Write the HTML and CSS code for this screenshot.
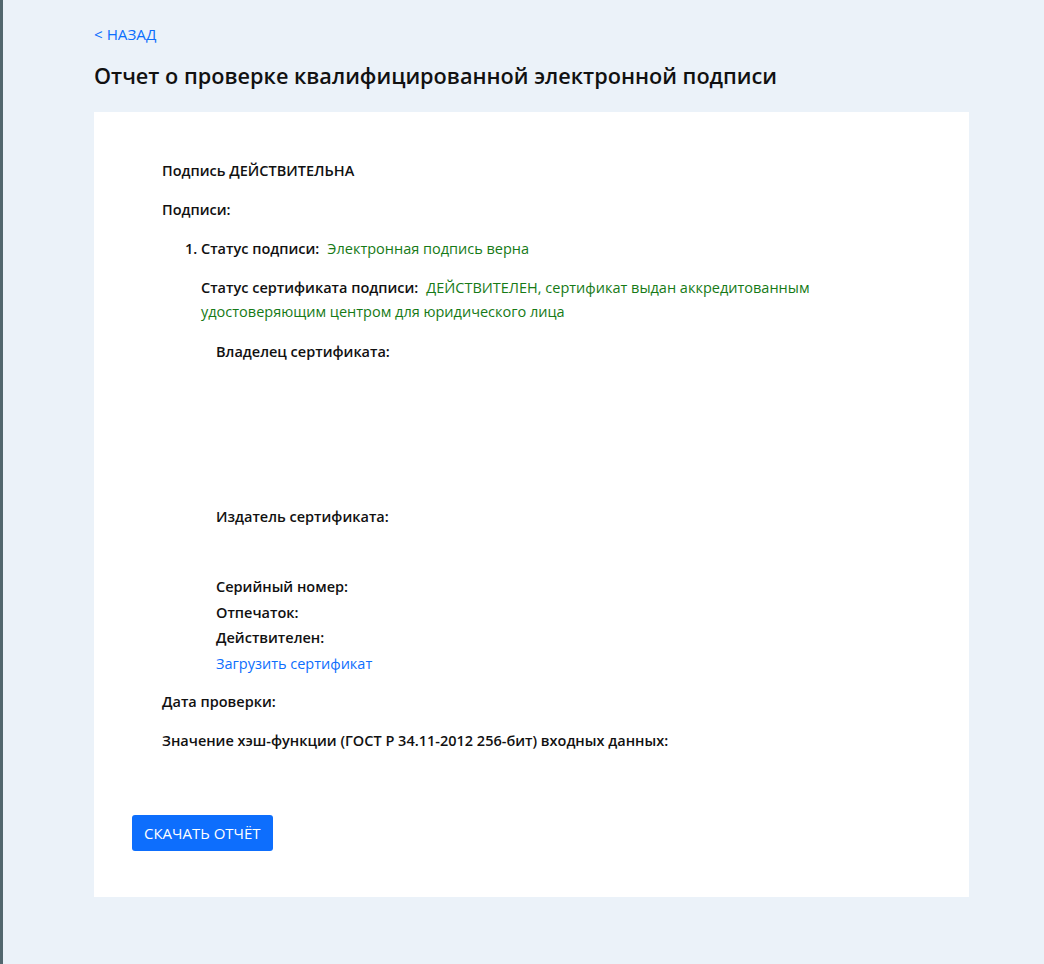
FILE: index.html
```html
<!DOCTYPE html>
<html lang="ru">

<head>
    <meta charset="UTF-8">
    <meta name="viewport" content="width=device-width, initial-scale=1.0">
    <title>Отчет о проверке</title>
    <link rel="stylesheet" href="styles.css">
</head>

<body>

    <div class="page">
        <a href="#" class="back">&lt; НАЗАД</a>
        <h1 class="title">Отчет о проверке квалифицированной электронной подписи</h1>

        <div class="card">
            <div class="report">
                <p class="verdict">Подпись ДЕЙСТВИТЕЛЬНА</p>
                <p><strong>Подписи:</strong></p>

                <ol class="signs">
                    <li>
                        <p><strong>Статус подписи:</strong><span class="ok">Электронная подпись верна</span></p>
                        <p class="certStatus"><strong>Статус сертификата подписи:</strong><span class="ok">ДЕЙСТВИТЕЛЕН, сертификат выдан аккредитованным удостоверяющим центром для юридического лица</span></p>

                        <div class="cert">
                            <div class="owner"><strong>Владелец сертификата:</strong></div>
                            <div class="issuer"><strong>Издатель сертификата:</strong></div>
                            <div class="row"><strong>Серийный номер:</strong></div>
                            <div class="row"><strong>Отпечаток:</strong></div>
                            <div class="row"><strong>Действителен:</strong></div>
                            <div class="row"><a href="#">Загрузить сертификат</a></div>
                        </div>
                    </li>
                </ol>

                <p><strong>Дата проверки:</strong></p>
                <p><strong>Значение хэш-функции (ГОСТ Р 34.11-2012 256-бит) входных данных:</strong></p>
            </div>

            <button class="download">СКАЧАТЬ ОТЧЁТ</button>
        </div>
    </div>

</body>

</html>
```

FILE: styles.css
```css
body {
    margin: 0px;
    background: #ebf2f9;
    border-left: 3px solid #52676e;
    min-height: 964px;
    box-sizing: border-box;
    font-family: 'Open Sans', 'Noto Sans', sans-serif;
    font-size: 14.5px;
    color: #111;
}

a {
    color: #0d6efd;
    text-decoration: none;
}

.page {
    width: 875px;
    margin-left: 91px;
    padding-top: 24px;
}

.back {
    display: block;
    font-size: 15.2px;
    line-height: 20px;
}

.title {
    margin: 20px 0px 24px 0px;
    font-size: 21.7px;
    font-weight: 600;
    line-height: 24px;
    color: #111;
}

.card {
    background: white;
    padding: 47px 38px 46px 38px;
}

.report {
    padding: 0px 30px;
}

.report p {
    margin: 0px 0px 15px 0px;
    line-height: 24px;
}

.report strong,
.verdict {
    font-weight: 600;
}

.ok {
    margin-left: 8px;
    color: #167a16;
}

.signs {
    margin: 0px 0px 14px 0px;
    padding-left: 39px;
}

.signs li::marker {
    font-weight: 600;
}

.certStatus {
    margin-bottom: 15px;
}

.cert {
    padding-left: 15px;
}

.cert div {
    line-height: 25.5px;
}

.owner {
    height: 165px;
}

.issuer {
    height: 70px;
}

.download {
    margin-top: 47px;
    padding: 8px 12px;
    border: none;
    border-radius: 3px;
    background: #0d6efd;
    color: white;
    font-family: 'Open Sans', 'Noto Sans', sans-serif;
    font-size: 15px;
    line-height: 20px;
    cursor: pointer;
}
```
